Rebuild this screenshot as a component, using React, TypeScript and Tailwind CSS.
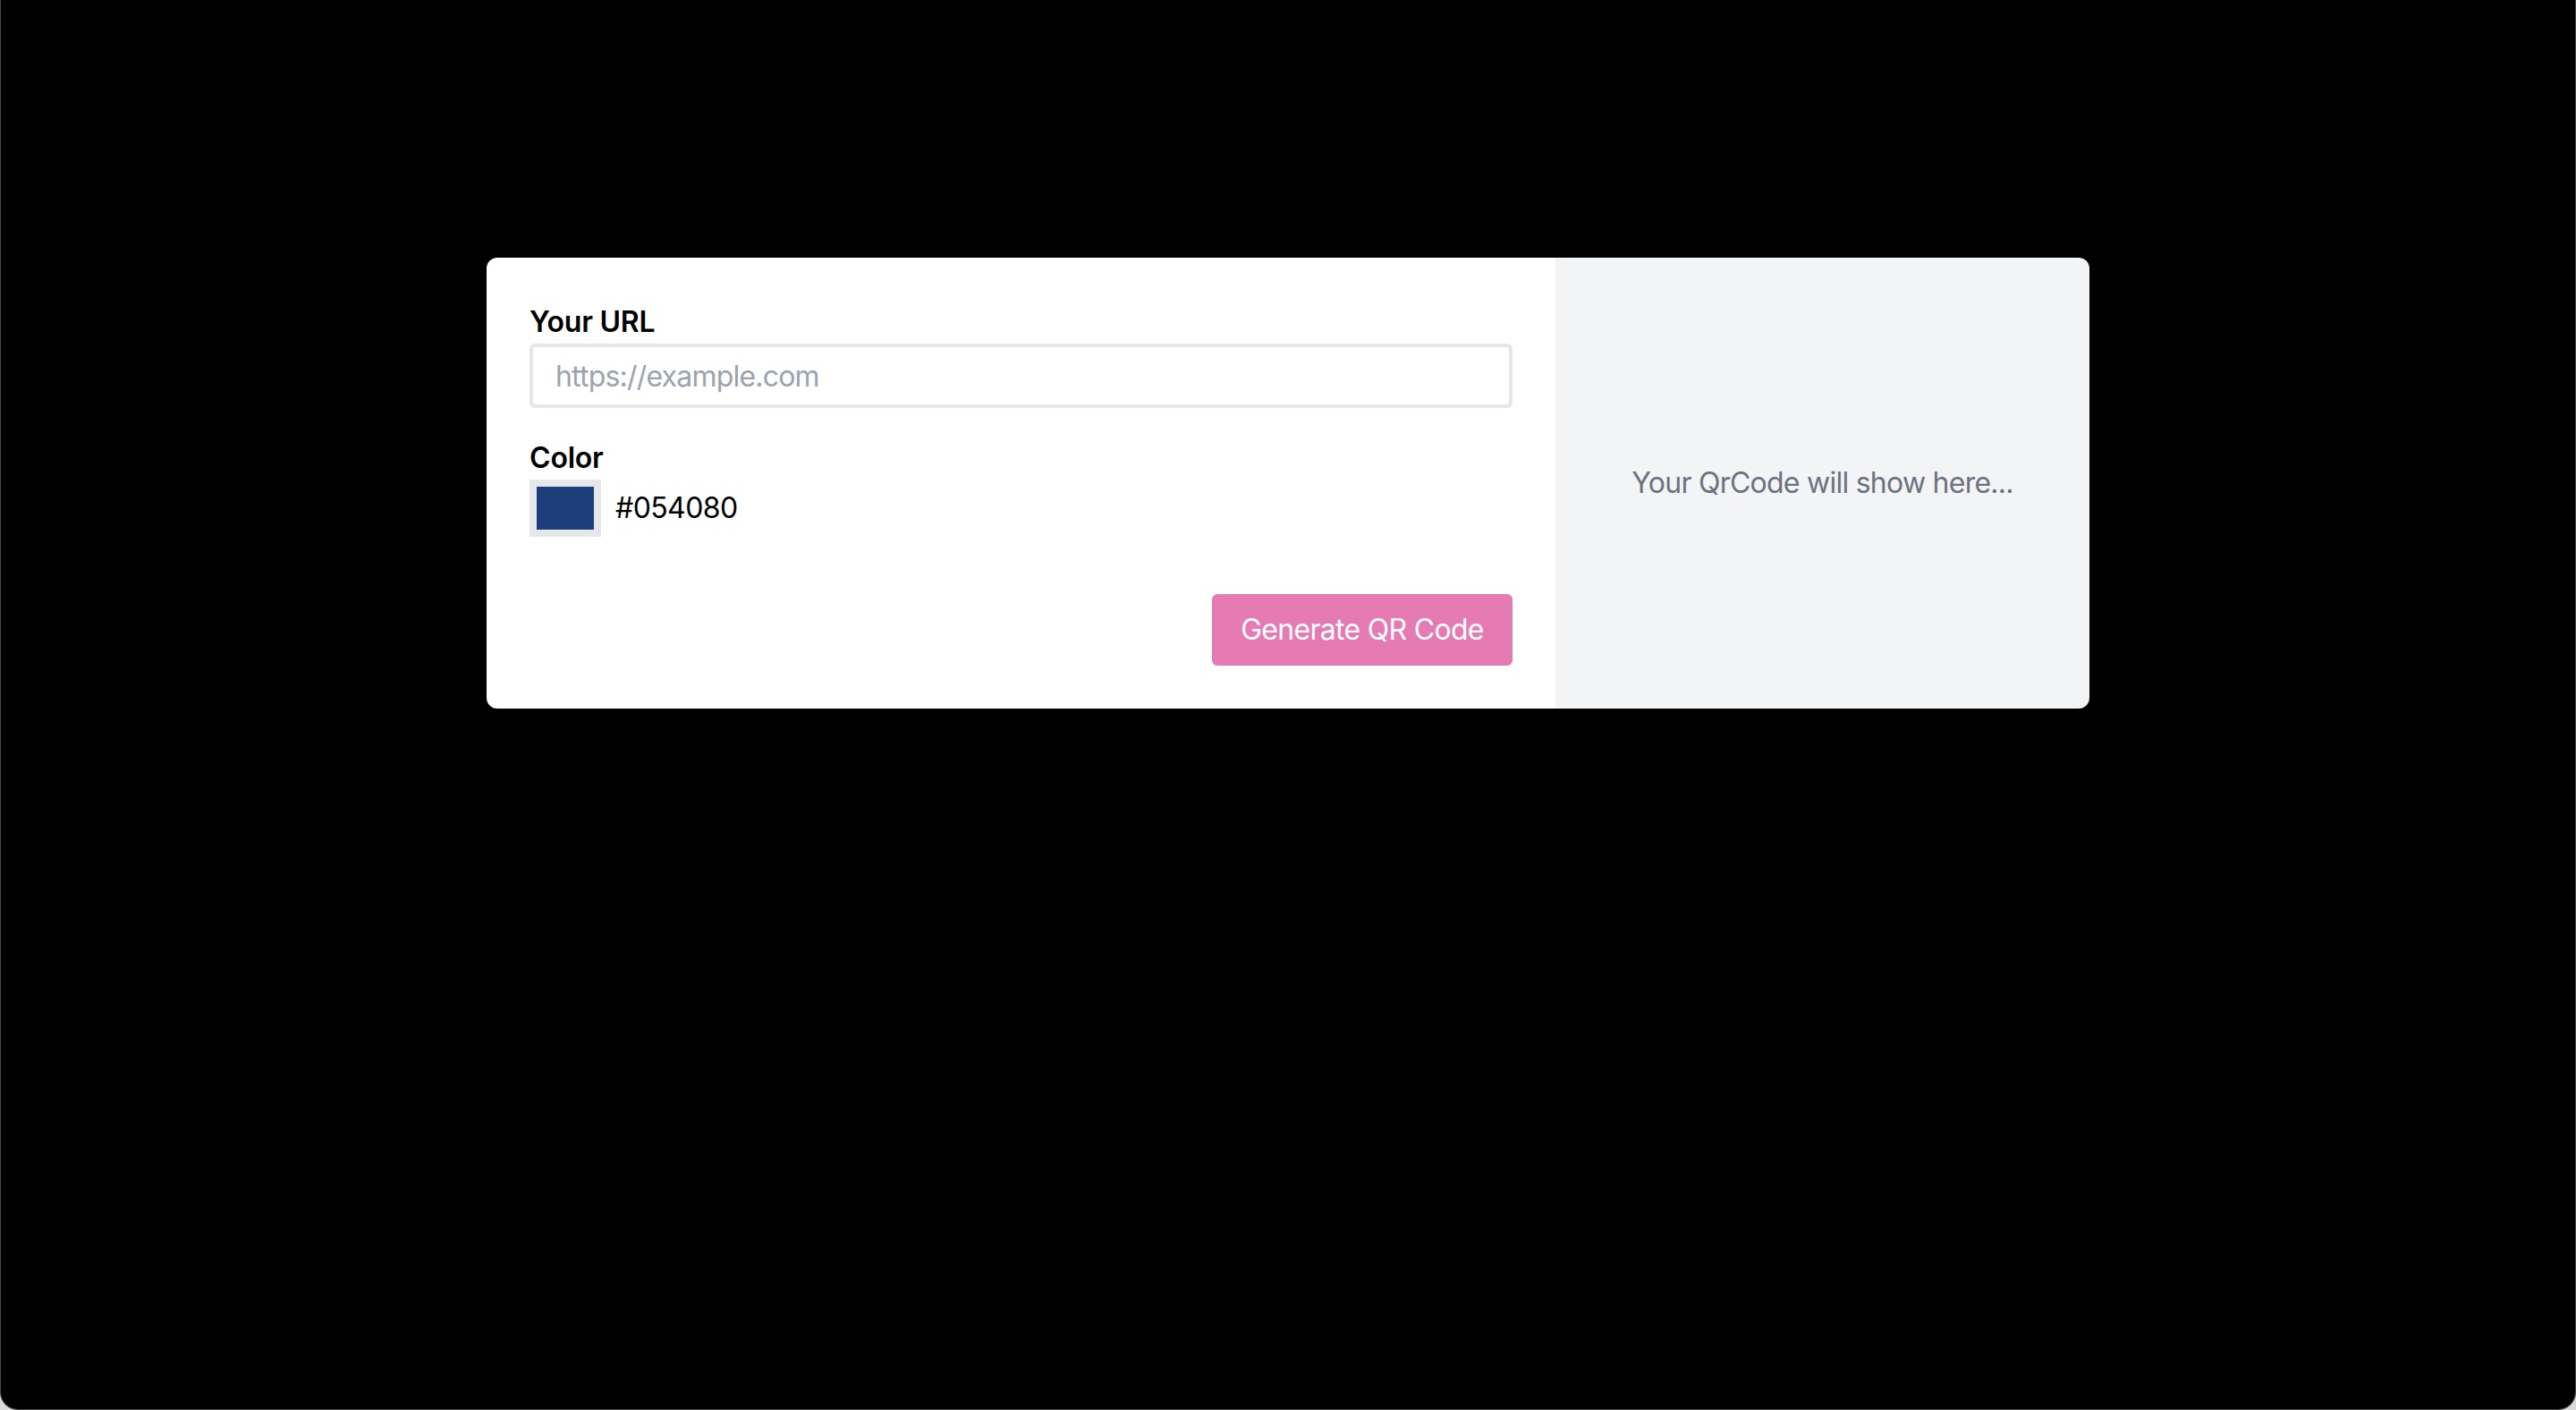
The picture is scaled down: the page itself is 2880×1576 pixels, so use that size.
import React from "react";

export default function App() {
  return (
    <div className="w-[2880px] h-[1576px] bg-[#d9d9d9]" style={{ fontFamily: "Inter, 'Liberation Sans', sans-serif" }}>
      <div className="w-full h-full bg-black border-x border-b border-[#4a4a4a] rounded-b-[20px] pt-[288px]">
        <div className="mx-auto w-[1792px] h-[504px] flex rounded-[12px] overflow-hidden">
          <div className="w-[1195px] bg-white p-[48px] flex flex-col">
            <label className="block text-[32px] leading-[48px] font-semibold text-black tracking-[-0.2px]">Your URL</label>
            <input
              type="text"
              placeholder="https://example.com"
              className="w-full h-[72px] border-[4px] border-[#e5e7eb] rounded-[6px] px-[25px] text-[32px] tracking-[-0.8px] text-black placeholder:text-[#9ca3af] outline-none"
            />
            <label className="block mt-[32px] text-[32px] leading-[48px] font-semibold text-black tracking-[-0.2px]">Color</label>
            <div className="flex items-center h-[64px]">
              <div className="w-[80px] h-[64px] bg-[#e5e7eb] p-[8px]">
                <div className="w-full h-full bg-[#1d3e7b]" />
              </div>
              <span className="ml-[16px] text-[32px] leading-[48px] text-black tracking-[-0.6px]">#054080</span>
            </div>
            <div className="mt-[64px] flex justify-end">
              <button className="w-[336px] h-[80px] rounded-[6px] bg-[#e67bb3] text-white text-[32px] leading-[48px] tracking-[-0.7px] flex items-center justify-center">
                Generate QR Code
              </button>
            </div>
          </div>
          <div className="flex-1 bg-[#f3f4f6] flex items-center justify-center">
            <p className="text-[32px] leading-[48px] text-[#6b7280] tracking-[-0.75px]">Your QrCode will show here...</p>
          </div>
        </div>
      </div>
    </div>
  );
}
